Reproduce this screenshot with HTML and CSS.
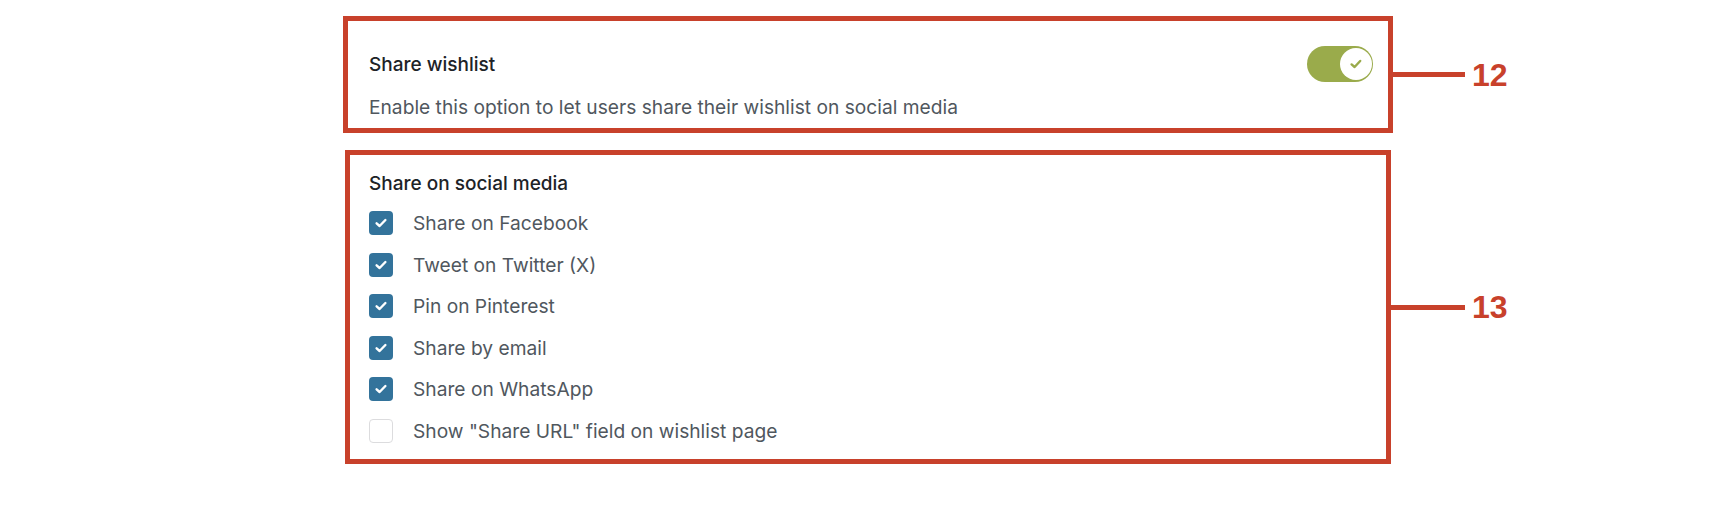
FILE: index.html
```html
<!DOCTYPE html>
<html lang="en">
<head>
  <meta charset="UTF-8" />
  <meta name="viewport" content="width=device-width, initial-scale=1.0"/>
  <title>Wishlist sharing settings</title>
  <link rel="stylesheet" href="styles.css">
</head>
<body>

  <div class="page">

    <!-- 12: share toggle -->
    <div class="callout callout-12">
      <section class="panel panel-toggle">
        <div class="panel-head">
          <h2 class="panel-title">Share wishlist</h2>
          <span class="toggle is-on">
            <span class="toggle-knob">
              <svg width="14" height="14" viewBox="0 0 14 14"><polyline points="2.6,7.4 5.6,10 11.2,4" fill="none" stroke="#9aab4b" stroke-width="2.4" stroke-linecap="round" stroke-linejoin="round"/></svg>
            </span>
          </span>
        </div>
        <p class="panel-desc">Enable this option to let users share their wishlist on social media</p>
      </section>
      <span class="callout-line"></span>
      <span class="callout-num">12</span>
    </div>

    <!-- 13: social networks -->
    <div class="callout callout-13">
      <section class="panel panel-list">
        <h2 class="panel-title">Share on social media</h2>
        <ul class="check-list">
          <li class="check-row"><span class="check is-checked"><svg width="14" height="14" viewBox="0 0 14 14"><polyline points="2.6,7.3 5.6,10 11.4,4" fill="none" stroke="#fff" stroke-width="2.4" stroke-linecap="round" stroke-linejoin="round"/></svg></span>Share on Facebook</li>
          <li class="check-row"><span class="check is-checked"><svg width="14" height="14" viewBox="0 0 14 14"><polyline points="2.6,7.3 5.6,10 11.4,4" fill="none" stroke="#fff" stroke-width="2.4" stroke-linecap="round" stroke-linejoin="round"/></svg></span>Tweet on Twitter (X)</li>
          <li class="check-row"><span class="check is-checked"><svg width="14" height="14" viewBox="0 0 14 14"><polyline points="2.6,7.3 5.6,10 11.4,4" fill="none" stroke="#fff" stroke-width="2.4" stroke-linecap="round" stroke-linejoin="round"/></svg></span>Pin on Pinterest</li>
          <li class="check-row"><span class="check is-checked"><svg width="14" height="14" viewBox="0 0 14 14"><polyline points="2.6,7.3 5.6,10 11.4,4" fill="none" stroke="#fff" stroke-width="2.4" stroke-linecap="round" stroke-linejoin="round"/></svg></span>Share by email</li>
          <li class="check-row"><span class="check is-checked"><svg width="14" height="14" viewBox="0 0 14 14"><polyline points="2.6,7.3 5.6,10 11.4,4" fill="none" stroke="#fff" stroke-width="2.4" stroke-linecap="round" stroke-linejoin="round"/></svg></span>Share on WhatsApp</li>
          <li class="check-row"><span class="check"></span>Show "Share URL" field on wishlist page</li>
        </ul>
      </section>
      <span class="callout-line"></span>
      <span class="callout-num">13</span>
    </div>

  </div>

</body>
</html>
```

FILE: styles.css
```css
body {
  margin: 0;
  background: #fff;
  font-family: 'Inter', 'Noto Sans', sans-serif;
  color: #50575e;
}
.page {
  display: flex;
  flex-direction: column;
  gap: 17px;
  padding: 16px 0 0 343px;
}
.callout {
  display: flex;
  align-items: center;
}
.panel {
  box-sizing: border-box;
  width: 1050px;
  border: 5px solid #c8412b;
  background: #fff;
}
.callout-line {
  width: 72px;
  height: 5px;
  background: #c8412b;
}
.callout-num {
  margin-left: 7px;
  font-family: 'Liberation Sans', Arial, sans-serif;
  font-weight: bold;
  font-size: 32px;
  line-height: 1;
  color: #c8412b;
}
.callout-13 .panel {
  width: 1046px;
  margin-left: 2px;
}
.callout-13 .callout-line {
  width: 74px;
}

.panel-title {
  margin: 0;
  font-size: 19px;
  line-height: 24px;
  font-weight: 500;
  color: #1d2327;
}

/* toggle panel */
.panel-toggle {
  height: 117px;
  padding: 24px 15px 9px 21px;
}
.panel-head {
  display: flex;
  justify-content: space-between;
  align-items: center;
  height: 38px;
}
.panel-head .panel-title {
  padding-top: 2px;
}
.panel-desc {
  margin: 12px 0 0;
  font-size: 19.2px;
  line-height: 24px;
}
.toggle {
  position: relative;
  width: 66px;
  height: 36px;
  border-radius: 18px;
  background: #ccc;
}
.toggle.is-on {
  background: #9aab4b;
}
.toggle-knob {
  position: absolute;
  top: 2px;
  right: 1px;
  width: 32px;
  height: 32px;
  border-radius: 50%;
  background: #fff;
  display: flex;
  align-items: center;
  justify-content: center;
}

/* checkbox panel */
.panel-list {
  height: 314px;
  padding: 17px 19px 16px;
}
.check-list {
  list-style: none;
  margin: 15px 0 0;
  padding: 0;
  display: flex;
  flex-direction: column;
  gap: 17.6px;
}
.check-row {
  display: flex;
  align-items: center;
  gap: 20px;
  height: 24px;
  font-size: 19.2px;
  line-height: 24px;
}
.check {
  box-sizing: border-box;
  width: 24px;
  height: 24px;
  border-radius: 4px;
  border: 1px solid #dcdcde;
  background: #fff;
  display: flex;
  align-items: center;
  justify-content: center;
}
.check.is-checked {
  border: none;
  background: #33739b;
}
```
